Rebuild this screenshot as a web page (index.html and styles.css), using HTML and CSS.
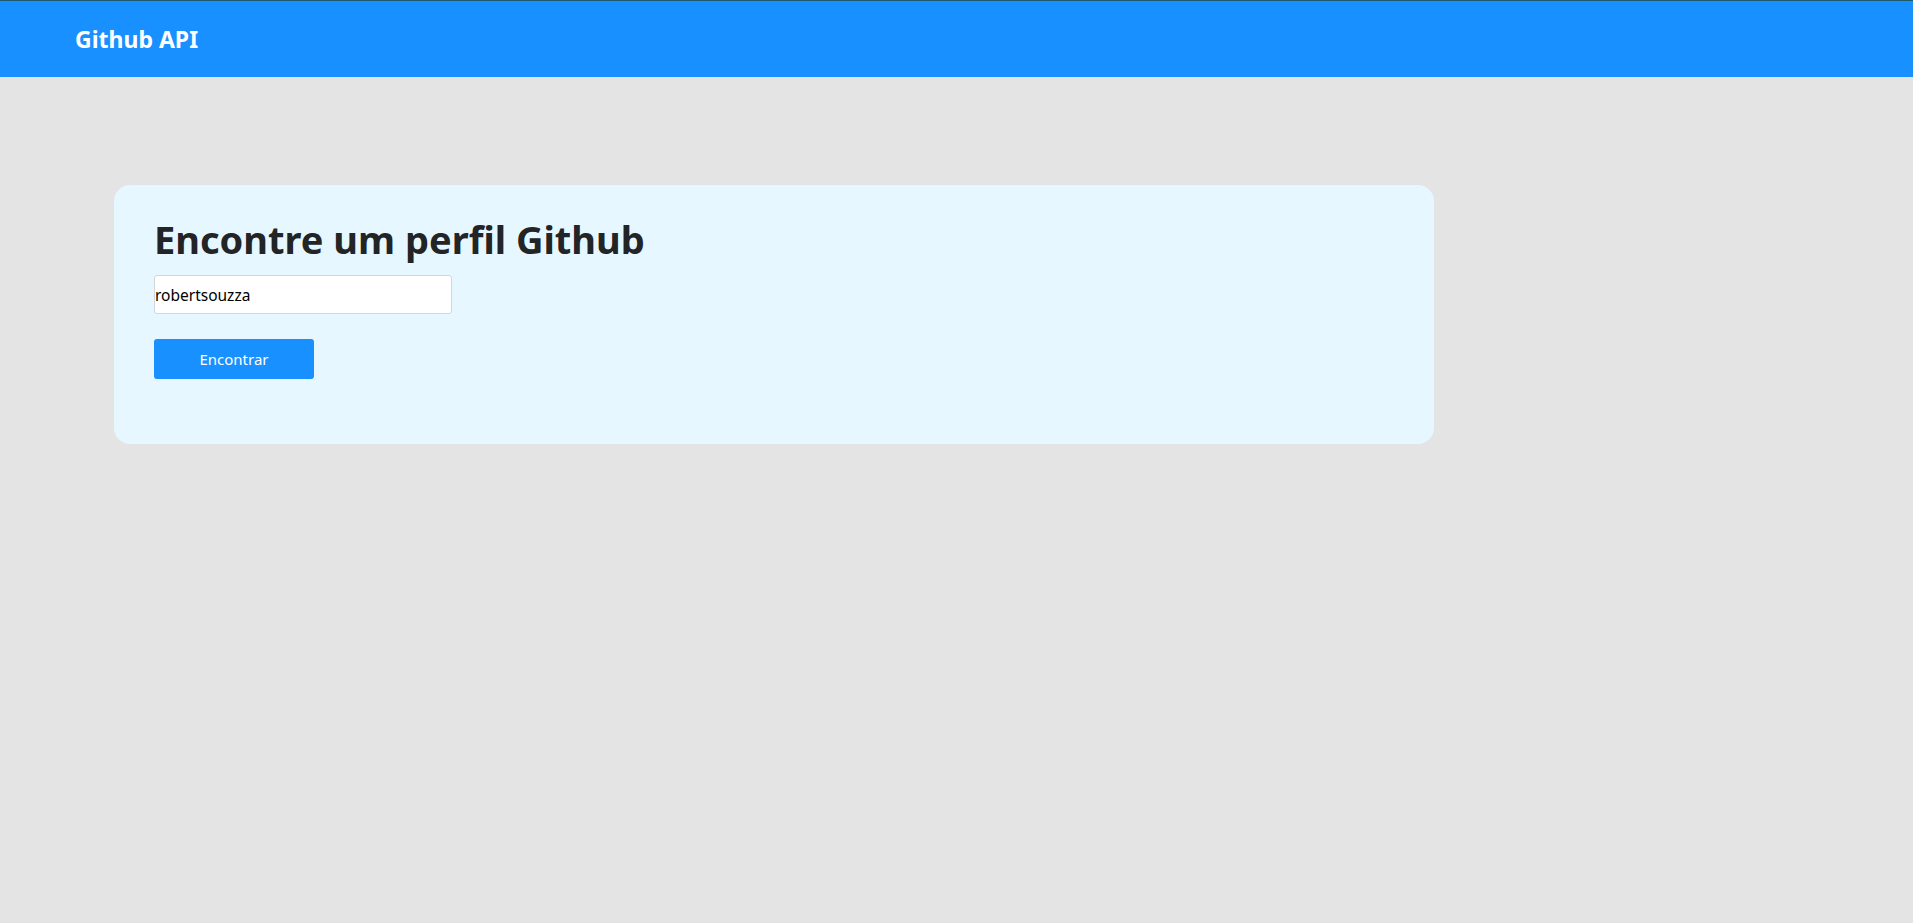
FILE: index.html
```html
<!DOCTYPE html>
<html lang="pt-BR">
<head>
<meta charset="utf-8">
<title>Github API</title>
<link rel="stylesheet" href="styles.css">
</head>
<body>
<header class="topbar">
  <div class="brand">Github API</div>
</header>
<main class="content">
  <section class="search-card">
    <h1 class="search-title">Encontre um perfil Github</h1>
    <form class="search-form">
      <input class="search-input" type="text" value="robertsouzza">
      <button class="search-button" type="button">Encontrar</button>
    </form>
  </section>
</main>
</body>
</html>
```
FILE: styles.css
```css
* { box-sizing: border-box; }
html, body { margin: 0; padding: 0; }
body {
  background: #e4e4e4;
  font-family: "Noto Sans", "Open Sans", sans-serif;
  min-height: 923px;
}
.topbar {
  height: 77px;
  background: #1890ff;
  border-top: 1px solid #1d5b6b;
  display: flex;
  align-items: center;
  padding-left: 75px;
}
.brand {
  color: #fff;
  font-weight: 700;
  font-size: 23px;
  line-height: 1;
  margin-top: 1px;
}
.content {
  padding: 108px 0 0 114px;
}
.search-card {
  width: 1320px;
  height: 259px;
  background: #e6f7ff;
  border-radius: 16px;
  padding: 30px 40px 0 40px;
}
.search-title {
  margin: 0;
  font-size: 38px;
  line-height: 48px;
  font-weight: 700;
  color: #222426;
}
.search-form {
  display: flex;
  flex-direction: column;
  align-items: flex-start;
  margin-top: 12px;
}
.search-input {
  width: 298px;
  height: 39px;
  border: 1px solid #d3d7db;
  border-radius: 3px;
  background: #fff;
  padding: 0;
  font-family: "Noto Sans", "Open Sans", sans-serif;
  font-size: 15.5px;
  color: #000;
}
.search-button {
  margin-top: 25px;
  width: 160px;
  height: 40px;
  border: none;
  border-radius: 3px;
  background: #1890ff;
  color: #fff;
  font-family: "Noto Sans", "Open Sans", sans-serif;
  font-size: 15px;
}
```
